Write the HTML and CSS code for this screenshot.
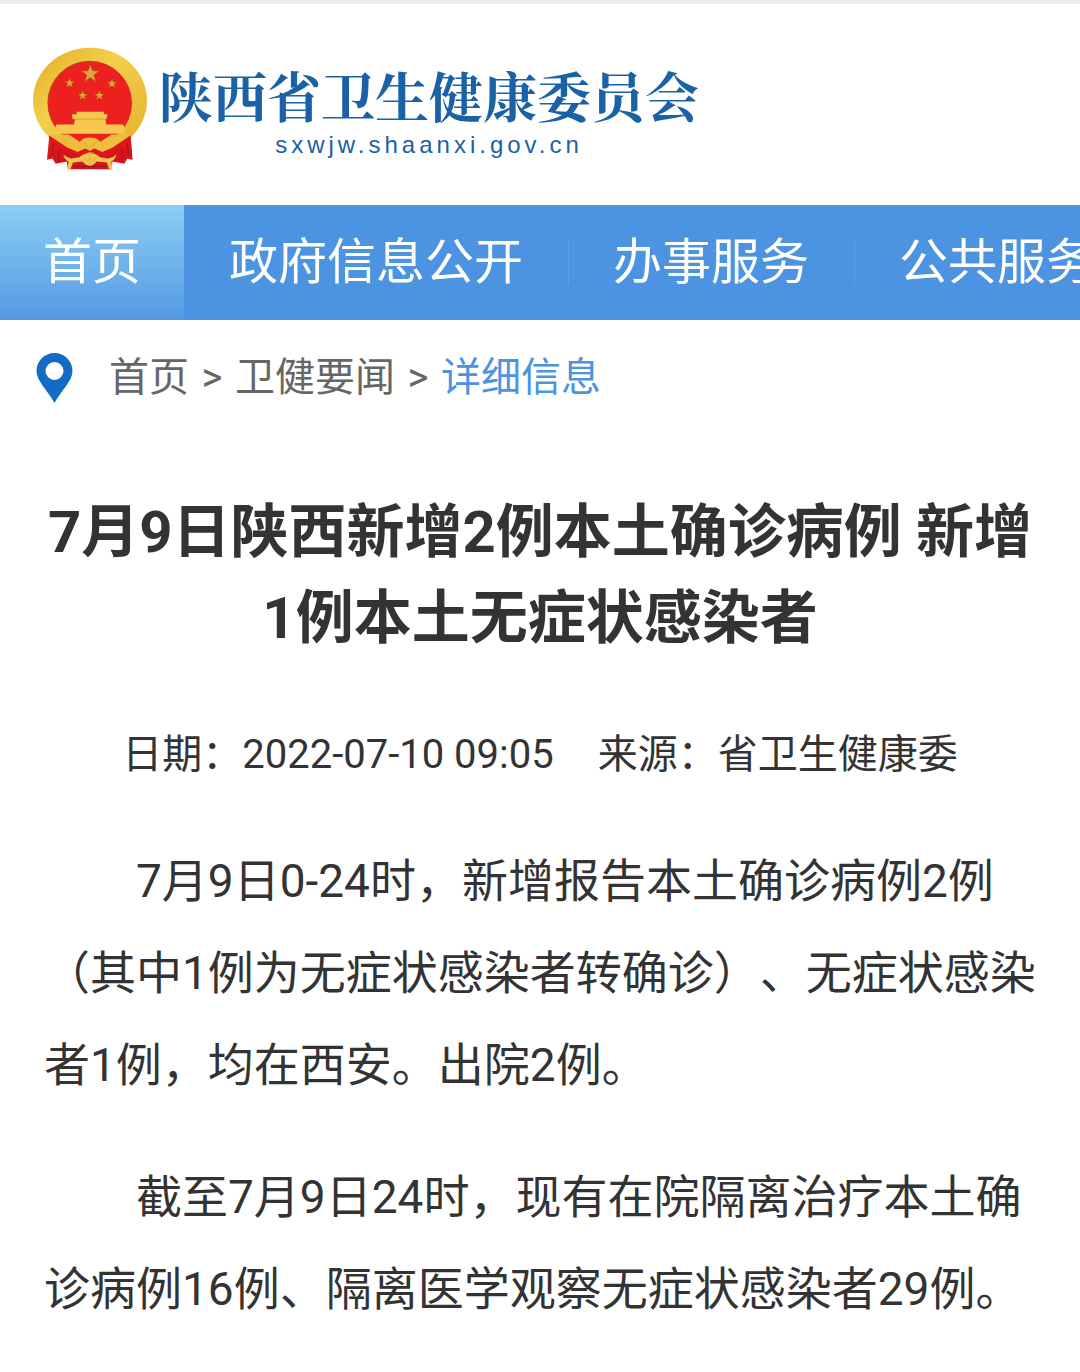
FILE: index.html
```html
<!DOCTYPE html>
<html lang="zh-CN">
<head>
    <meta charset="UTF-8">
    <meta name="viewport" content="width=device-width, initial-scale=1.0">
    <title>7月9日陕西新增2例本土确诊病例 新增1例本土无症状感染者</title>
    <link rel="stylesheet" href="styles.css">
</head>
<body>
    <!-- 顶部logo -->
    <header class="header">
        <a class="logo" href="#">
            <svg class="emblem" viewBox="38 36 342 368" aria-hidden="true">
                <defs>
                    <linearGradient id="gold" x1="0" y1="0" x2="1" y2="1">
                        <stop offset="0" stop-color="#e2ad25"/>
                        <stop offset="0.4" stop-color="#f3cf4c"/>
                        <stop offset="1" stop-color="#e5b02c"/>
                    </linearGradient>
                    <path id="star" d="M0-10 2.4-3.2 9.5-3.1 3.8 1.2 5.9 8.1 0 4-5.9 8.1-3.8 1.2-9.5-3.1-2.4-3.2Z"/>
                </defs>
                <path fill="#d5151c" d="M88 292 80 374 96 370 106 386 140 379 142 402 274 402 276 379 312 386 321 371 337 374 330 292Z"/>
                <ellipse cx="209" cy="196" rx="171" ry="158" fill="url(#gold)"/>
                <ellipse cx="207" cy="203" rx="126" ry="126" fill="#9f6c18"/>
                <ellipse cx="209" cy="204" rx="126" ry="126" fill="#eb201f"/>
                <g fill="#dba735" stroke="#9c5b18" stroke-width="0.5">
                    <use href="#star" transform="translate(210 116) scale(2.8)"/>
                    <use href="#star" transform="translate(148 144) scale(1.5)"/>
                    <use href="#star" transform="translate(275 145) scale(1.5)"/>
                    <use href="#star" transform="translate(187 181) scale(1.5)"/>
                    <use href="#star" transform="translate(237 181) scale(1.5)"/>
                </g>
                <path fill="#f6c850" d="M168 230H252L250 237H262L258 252H255L258 268H309L313 278V296H104V278L108 268H161L164 252H157L154 237H170Z"/>
                <path stroke="#d98a29" stroke-width="2" d="M164 252H255"/>
                <path fill="#dd171c" d="M86 300 104 312 142 337 172 350 195 339 209 347 222 339 246 350 276 337 312 312 331 300 333 350 300 337 280 344 258 352 236 359 220 353 208 351 197 354 178 361 151 350 119 339 86 352Z"/>
                <path fill="#efbd3b" d="M104 298H145L178 320Q190 306 208 307 229 306 240 320L274 298H313L331 300 276 337 246 350 222 339 209 347 195 339 172 350 142 337 86 300Z"/>
                <path fill="#f4c550" d="M177 366Q191 353 208 354 226 353 239 366L264 370Q279 368 288 358 286 371 273 379L276 402H267L259 382 229 379Q220 391 208 392 195 391 187 379L158 382 150 402H140L145 380Q132 372 129 358 141 369 153 370Z"/>
                <path fill="none" stroke="#d99c2b" stroke-width="2" d="M190 365 202 382M208 359V386M227 365 215 382M189 318 202 334M229 318 215 334"/>
                <path fill="none" stroke="#9e1116" stroke-width="3" d="M99 322 95 361M113 348 116 381M321 322 325 362M306 348 303 380M161 394H256"/>
            </svg>
            <span class="logo-text">
                <span class="site-name">陕西省卫生健康委员会</span>
                <span class="site-url">sxwjw.shaanxi.gov.cn</span>
            </span>
        </a>
    </header>

    <!-- 导航 -->
    <nav class="nav">
        <a class="nav-item active" href="#">首页</a>
        <a class="nav-item" href="#">政府信息公开</a>
        <a class="nav-item" href="#">办事服务</a>
        <a class="nav-item" href="#">公共服务</a>
    </nav>

    <!-- 当前位置 -->
    <div class="crumbs">
        <svg class="pin" viewBox="0 0 36 50" aria-hidden="true">
            <path fill="#126bc5" fill-rule="evenodd" d="M18 0C8 0 0 8 0 18 0 28 11 37 18 50 25 37 36 28 36 18 36 8 28 0 18 0ZM18 9a9 9 0 1 1 0 18 9 9 0 0 1 0-18Z"/>
        </svg>
        <a href="#">首页</a>
        <span class="sep">&gt;</span>
        <a href="#">卫健要闻</a>
        <span class="sep">&gt;</span>
        <a class="current" href="#">详细信息</a>
    </div>

    <!-- 正文 -->
    <main class="article">
        <h1>7月9日陕西新增2例本土确诊病例 新增1例本土无症状感染者</h1>
        <div class="meta">
            <span>日期：2022-07-10 09:05</span>
            <span>来源：省卫生健康委</span>
        </div>
        <p>7月9日0-24时，新增报告本土确诊病例2例（其中1例为无症状感染者转确诊）、无症状感染者1例，均在西安。出院2例。</p>
        <p>截至7月9日24时，现有在院隔离治疗本土确诊病例16例、隔离医学观察无症状感染者29例。</p>
    </main>
</body>
</html>
```
FILE: styles.css
```css
* {
    margin: 0;
    padding: 0;
    box-sizing: border-box;
}

body {
    border-top: 4px solid #ececec;
    background: #fff;
    color: #333;
    font-family: Roboto, "Noto Sans CJK SC", sans-serif;
    text-spacing-trim: space-all;
    overflow-x: hidden;
}

a {
    color: inherit;
    text-decoration: none;
}

/* 顶部 */
.header {
    padding: 43px 33px 35px;
}

.logo {
    display: flex;
    gap: 12px;
    color: #1b61a5;
}

.emblem {
    width: 114px;
    height: 123px;
    flex-shrink: 0;
}

.logo-text {
    display: flex;
    flex-direction: column;
    align-items: center;
    gap: 4px;
    padding-top: 16px;
}

.site-name {
    font-family: "Noto Serif CJK SC", "Noto Sans CJK SC", serif;
    font-size: 54px;
    font-weight: bold;
    line-height: 64px;
    white-space: nowrap;
}

.site-url {
    font-family: "Liberation Sans", Arial, sans-serif;
    font-size: 24px;
    line-height: 28px;
    letter-spacing: 4px;
}

/* 导航 */
.nav {
    display: flex;
    background: #4c93e2;
    color: #fff;
    font-size: 49px;
    line-height: 115px;
    white-space: nowrap;
    overflow: hidden;
}

.nav-item {
    flex-shrink: 0;
    padding: 0 45px;
}

.nav-item.active {
    padding: 0 43px;
    background: linear-gradient(#8acff3, #5599e3);
}

/* 分隔线 */
.nav-item:not(.active) + .nav-item {
    background: linear-gradient(#5d9fe8, #5d9fe8) left center / 1px 44px no-repeat;
}

/* 当前位置 */
.crumbs {
    display: flex;
    align-items: center;
    padding: 29px 36px;
    color: #666;
    font-size: 40px;
    line-height: 58px;
}

.pin {
    width: 37px;
    height: 50px;
    margin-right: 36px;
}

.sep {
    width: 46px;
    text-align: center;
}

.current {
    color: #4c93e2;
}

/* 正文 */
.article {
    padding: 53px 44px 40px;
}

.article h1 {
    font-size: 58px;
    line-height: 86px;
    text-align: center;
}

.meta {
    display: flex;
    justify-content: center;
    gap: 44px;
    margin: 64px 0 50px;
    font-size: 40px;
    line-height: 60px;
}

.article p {
    margin-bottom: 40px;
    font-size: 46px;
    line-height: 92px;
    text-indent: 2em;
}
```
